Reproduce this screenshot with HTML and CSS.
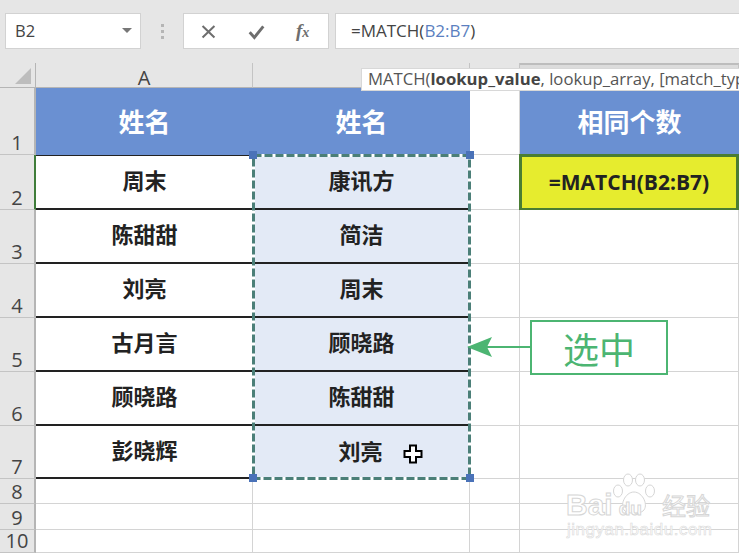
FILE: index.html
```html
<!DOCTYPE html>
<html lang="zh">
<head>
<meta charset="utf-8">
<title>MATCH</title>
<link rel="stylesheet" href="styles.css">
</head>
<body>
<div class="app">
  <div class="bar">
    <div class="namebox"><span>B2</span><i class="caret"></i></div>
    <div class="dots"><i></i><i></i><i></i></div>
    <div class="fxbox">
      <svg class="ico" viewBox="0 0 20 20"><path d="M3 3.500 17 17M17 3.500 3 17" stroke="#6e6e6e" stroke-width="2.400" fill="none"/></svg>
      <svg class="ico" viewBox="0 0 20 20"><path d="M2 11 7.500 17 18 4" stroke="#6e6e6e" stroke-width="3.400" fill="none"/></svg>
      <span class="fx">f<small>x</small></span>
    </div>
    <div class="formula">=MATCH(<span class="ref">B2:B7</span>)</div>
  </div>

  <div class="sheet">
    <div class="head corner"><i class="tri"></i></div>
    <div class="head col">A</div>
    <div class="head col"></div>
    <div class="head col"></div>
    <div class="head col top"></div>

    <div class="head row">1</div>
    <div class="title">姓名</div>
    <div class="title">姓名</div>
    <div class="cell"></div>
    <div class="title">相同个数</div>

    <div class="head row active">2</div>
    <div class="name first">周末</div>
    <div class="name blue first">康讯方</div>
    <div class="cell"></div>
    <div class="edit">=MATCH(B2:B7)</div>

    <div class="head row">3</div>
    <div class="name">陈甜甜</div>
    <div class="name blue">简洁</div>
    <div class="cell"></div>
    <div class="cell"></div>

    <div class="head row">4</div>
    <div class="name">刘亮</div>
    <div class="name blue">周末</div>
    <div class="cell"></div>
    <div class="cell"></div>

    <div class="head row">5</div>
    <div class="name">古月言</div>
    <div class="name blue">顾晓路</div>
    <div class="cell"></div>
    <div class="cell"></div>

    <div class="head row">6</div>
    <div class="name">顾晓路</div>
    <div class="name blue">陈甜甜</div>
    <div class="cell"></div>
    <div class="cell"></div>

    <div class="head row">7</div>
    <div class="name">彭晓辉</div>
    <div class="name blue last">刘亮</div>
    <div class="cell"></div>
    <div class="cell"></div>

    <div class="head row">8</div><div class="cell"></div><div class="cell"></div><div class="cell"></div><div class="cell"></div>
    <div class="head row">9</div><div class="cell"></div><div class="cell"></div><div class="cell"></div><div class="cell"></div>
    <div class="head row">10</div><div class="cell"></div><div class="cell"></div><div class="cell"></div><div class="cell"></div>

    <div class="selection">
      <svg class="ants" viewBox="0 0 219 326" preserveAspectRatio="none">
        <rect x="1.500" y="1.500" width="216" height="323" fill="none" stroke="#fff" stroke-width="3"/>
        <rect x="1.500" y="1.500" width="216" height="323" fill="none" stroke="#4b7f78" stroke-width="3" stroke-dasharray="8 3"/>
      </svg>
      <i class="handle tl"></i><i class="handle tr"></i><i class="handle bl"></i><i class="handle br"></i>
    </div>
  </div>

  <div class="tooltip">MATCH(<b>lookup_value</b>, lookup_array, [match_type])</div>

  <svg class="arrow" viewBox="0 0 66 20"><path d="M20 10H66" stroke="#4cb572" stroke-width="2"/><path d="M0 10 25 0 20 10 25 20Z" fill="#4cb572"/></svg>
  <div class="callout">选中</div>

  <svg class="cursor" viewBox="0 0 20 20"><path d="M7 1.500H13V7H18.500V13H13V18.500H7V13H1.500V7H7Z" fill="#fff" stroke="#000" stroke-width="2"/></svg>

  <div class="watermark">
    <svg class="paw" viewBox="0 0 44 44"><g fill="#fff" stroke="#d6d6d6" stroke-width="1"><ellipse cx="6" cy="18" rx="4.500" ry="6"/><ellipse cx="16" cy="7" rx="4.500" ry="6"/><ellipse cx="28" cy="7" rx="4.500" ry="6"/><ellipse cx="38" cy="18" rx="4.500" ry="6"/><path d="M22 19C13 19 7 33 13 38 17 41 27 41 31 38 37 33 31 19 22 19Z"/></g></svg>
    <div class="wm-main"><span>Bai</span><span class="wm-du">du</span><span class="wm-cn">经验</span></div>
    <div class="wm-sub">jingyan.baidu.com</div>
  </div>
</div>
</body>
</html>
```
FILE: styles.css
```css
* { box-sizing: border-box; }
html, body { margin: 0; padding: 0; }
body { background: #fff; overflow: hidden; font-family: "Open Sans", "Noto Sans CJK SC", sans-serif; }
.app { position: relative; width: 739px; height: 553px; overflow: hidden; }

.bar { display: flex; align-items: stretch; height: 63px; padding: 13px 0 14px 5px; background: #e6e6e6; }
.namebox { display: flex; align-items: center; justify-content: space-between; width: 136px; padding: 0 8px 2px 9px; background: #fff; border: 1px solid #d2d2d2; font-size: 16.500px; color: #444; }
.caret { width: 0; height: 0; border-left: 5px solid transparent; border-right: 5px solid transparent; border-top: 5px solid #777; }
.dots { display: flex; flex-direction: column; justify-content: center; gap: 3px; width: 42px; align-items: center; }
.dots i { width: 3px; height: 3px; background: #b5b5b5; }
.fxbox { display: flex; align-items: center; justify-content: space-between; width: 146px; padding: 0 14px 0 16px; background: #fff; border: 1px solid #d2d2d2; }
.ico { width: 17px; height: 17px; }
.fx { width: 18px; font-family: "Liberation Serif", serif; font-style: italic; font-weight: 700; font-size: 19px; color: #6e6e6e; white-space: nowrap; }
.fx small { font-size: 14px; }
.formula { flex: 1; margin-left: 6px; padding: 0 0 2px 15px; display: flex; align-items: center; background: #fff; border: 1px solid #d2d2d2; border-right: 0; font-size: 17px; color: #444; }
.ref { color: #5b7fc0; }

.sheet { position: relative; display: grid; grid-template-columns: 36px 217px 217px 50px 219px; grid-template-rows: 25px 67px 55px 54px 54px 54px 54px 53px 25px 26px 23px; height: 490px; }
.head { background: #e6e6e6; color: #444; font-size: 20px; display: flex; }
.corner { border-right: 1px solid #b5b5b5; border-bottom: 1px solid #b5b5b5; align-items: flex-end; justify-content: flex-end; padding: 0 4px 3px 0; }
.tri { width: 0; height: 0; border-left: 16px solid transparent; border-bottom: 16px solid #bdbdbd; }
.col { align-items: flex-end; justify-content: center; border-right: 1px solid #c4c4c4; border-bottom: 1px solid #b5b5b5; line-height: 18px; }
.top { border-top: 2px solid #bdbdbd; background: #dcdcdc; }
.row { align-items: flex-end; justify-content: center; border-right: 2px solid #b5b5b5; border-bottom: 1px solid #c4c4c4; line-height: 22px; }
.row.active { border-right: 2px solid #3f7d3a; }

.cell { border-right: 1px solid #d4d4d4; border-bottom: 1px solid #d4d4d4; background: #fff; }
.title { display: flex; align-items: center; justify-content: center; background: #6a90d2; color: #fff; font-size: 26px; font-weight: 700; font-family: "Noto Sans CJK SC", sans-serif; padding-bottom: 2px; }
.name { display: flex; align-items: center; justify-content: center; font-family: "Noto Sans CJK SC", sans-serif; font-weight: 700; font-size: 22px; color: #222; border-bottom: 2px solid #222; padding-bottom: 6px; white-space: nowrap; }
.name.first { border-top: 1px solid #222; }
.blue { background: #e3eaf6; }
.blue.last { padding-top: 2px; padding-right: 2px; }
.edit { display: flex; align-items: center; justify-content: center; background: #e6ec2e; border: 3px solid #4a7d33; margin: -1px 0 -1px -1px; padding-bottom: 2px; font-size: 21px; font-weight: 700; color: #222; white-space: nowrap; }

.selection { grid-column: 3 / 4; grid-row: 3 / 9; position: absolute; inset: -1px; pointer-events: none; }
.ants { display: block; width: 100%; height: 100%; }
.handle { position: absolute; width: 8px; height: 8px; background: #4a72b8; }
.tl { left: -3px; top: -3px; }
.tr { right: -3px; top: -3px; }
.bl { left: -3px; bottom: -2px; }
.br { right: -3px; bottom: -2px; }

.tooltip { position: absolute; left: 361px; top: 68px; width: 378px; height: 23px; padding-left: 6px; background: #fff; border: 1px solid #d8d8d8; border-right: 0; font-size: 16.700px; line-height: 20px; color: #555; white-space: nowrap; overflow: hidden; }
.tooltip b { color: #444; }

.arrow { position: absolute; left: 467px; top: 337px; width: 66px; height: 20px; }
.callout { position: absolute; left: 530px; top: 320px; width: 138px; height: 55px; display: flex; align-items: center; justify-content: center; border: 2px solid #4cb572; background: #fff; color: #4cb572; font-family: "Noto Sans CJK SC", sans-serif; font-size: 36px; }

.cursor { position: absolute; left: 403px; top: 444px; width: 20px; height: 20px; }

.watermark { position: absolute; left: 566px; top: 473px; width: 173px; height: 65px; color: #fff; }
.paw { position: absolute; left: 46px; top: 0; width: 44px; height: 44px; }
.wm-main { position: absolute; left: 0; top: 14px; display: flex; align-items: baseline; font-family: "Liberation Sans", sans-serif; font-size: 30px; font-weight: 700; -webkit-text-stroke: 1px #d6d6d6; }
.wm-du { position: relative; margin-left: 6px; font-size: 19px; }
.wm-cn { margin-left: 20px; font-family: "Noto Sans CJK SC", sans-serif; font-size: 24px; font-weight: 400; }
.wm-sub { position: absolute; left: 1px; top: 47px; font-family: "Liberation Sans", sans-serif; font-size: 17px; letter-spacing: .5px; -webkit-text-stroke: .6px #dadada; white-space: nowrap; }
```
